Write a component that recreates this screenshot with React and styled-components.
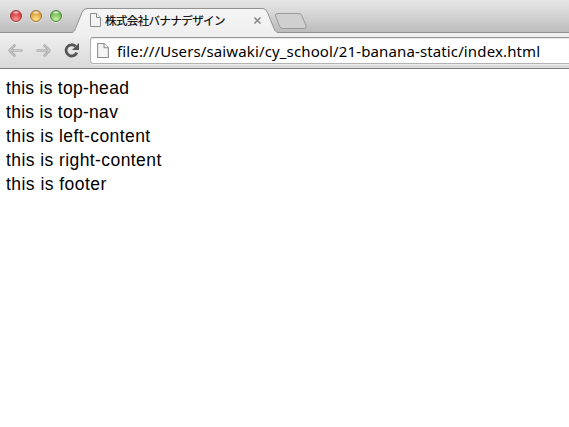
import React from 'react';
import styled, { createGlobalStyle } from 'styled-components';

const GlobalStyle = createGlobalStyle`
  * { box-sizing: border-box; }
  body { margin: 0; background: #fff; color: #000; overflow: hidden; }
`;

const Window = styled.div`
  width: 569px;
  height: 427px;
  overflow: hidden;
  background: #fff;
`;

const TabStrip = styled.header`
  position: relative;
  display: flex;
  height: 33px;
  background: linear-gradient(#e6e6e6, #d5d5d5 45%, #bcbcbc 32px);
  border-bottom: 1px solid #929292;
`;

const WindowControls = styled.div`
  display: flex;
  gap: 8px;
  width: 72px;
  padding: 10px 0 0 10px;
`;

const Light = styled.span`
  width: 12px;
  height: 12px;
  border-radius: 50%;
  border: 1px solid ${({ $edge }) => $edge};
  background:
    radial-gradient(ellipse 4px 2px at 50% 15%, rgba(255, 255, 255, 0.85), transparent),
    radial-gradient(circle at 50% 85%, ${({ $glow }) => $glow}, ${({ $fill }) => $fill} 65%);
  box-shadow: 0 1px 0 rgba(255, 255, 255, 0.5);
`;

const Tab = styled.div`
  position: relative;
  width: 206px;
  height: 33px;
  flex: none;
`;

const TabShape = styled.svg`
  position: absolute;
  left: 0;
  top: 0;
`;

const TabContent = styled.div`
  position: relative;
  display: flex;
  align-items: center;
  height: 33px;
  padding: 7px 16px 0 18px;
`;

const TabTitle = styled.span`
  flex: 1;
  margin-left: 4px;
  font: 400 11.5px/16px "Noto Sans CJK JP", sans-serif;
  letter-spacing: -0.6px;
  -webkit-text-stroke: 0.15px #000;
  white-space: nowrap;
`;

const CloseIcon = styled.svg`
  margin-top: 1px;
`;

const NewTab = styled.svg`
  margin: 12px 0 0 -4px;
  flex: none;
`;

const Toolbar = styled.nav`
  display: flex;
  align-items: flex-start;
  height: 36px;
  padding: 4px 0 0 7px;
  background: linear-gradient(#f0f0f0, #d9d9d9);
  border-bottom: 1px solid #7d7d7d;
`;

const NavIcons = styled.svg`
  flex: none;
  width: 83px;
`;

const AddressBar = styled.div`
  display: flex;
  align-items: center;
  flex: 1;
  height: 27px;
  padding-left: 6px;
  background: #fff;
  border: 1px solid #b2b2b2;
  border-top-color: #989898;
  border-right: 0;
  border-radius: 3px 0 0 3px;
  box-shadow: inset 0 1px 1px #e8e8e8, 0 1px 0 #ededed;
`;

const Address = styled.span`
  margin-left: 8px;
  font: 15px/22px "Noto Sans", sans-serif;
  letter-spacing: 0.13px;
  white-space: nowrap;
`;

const Page = styled.main`
  padding: 7px 6px;
  font: 17.5px/24px "Liberation Sans", sans-serif;
`;

const Line = styled.div`
  white-space: nowrap;
  letter-spacing: ${({ $spacing }) => $spacing};
`;

const DocumentIcon = ({ width = 11, height = 14 }) => (
  <svg width={width} height={height} viewBox="0 0 11 14">
    <path d="M.5.5h6l4 4v9H.5z" fill="#f4f4f4" stroke="#8c8c8c" />
    <path d="M6.5.5v4h4" fill="#fff" stroke="#8c8c8c" />
  </svg>
);

const lines = [
  ['this is top-head', '0.28px'],
  ['this is top-nav', '0.28px'],
  ['this is left-content', '0.42px'],
  ['this is right-content', '0.42px'],
  ['this is footer', '0.46px'],
];

export default function App() {
  return (
    <Window>
      <GlobalStyle />
      <TabStrip>
        <WindowControls>
          <Light $edge="#a03a3c" $fill="#d63c40" $glow="#ff9c98" />
          <Light $edge="#a2743a" $fill="#e0a23c" $glow="#ffe68c" />
          <Light $edge="#53883f" $fill="#72b956" $glow="#c8f6a4" />
        </WindowControls>
        <Tab>
          <TabShape width="206" height="33">
            <defs>
              <linearGradient id="tab" x2="0" y2="1">
                <stop stopColor="#f5f5f5" />
                <stop offset="1" stopColor="#efefef" />
              </linearGradient>
            </defs>
            <path d="M0 33V32.5C2 32 2.5 31 3.5 28.5L10 12.5Q11.5 8.5 15 8.5H191Q194 8.5 195.5 12.5L202 28.5C203 31 204 32 206 32.5V33Z" fill="url(#tab)" />
            <path d="M0 32.5C2 32 2.5 31 3.5 28.5L10 12.5Q11.5 8.5 15 8.5H191Q194 8.5 195.5 12.5L202 28.5C203 31 204 32 206 32.5" fill="none" stroke="#929292" />
          </TabShape>
          <TabContent>
            <DocumentIcon />
            <TabTitle>株式会社バナナデザイン</TabTitle>
            <CloseIcon width="9" height="9">
              <path d="M1.5 1.5l6 6m0-6l-6 6" stroke="#8a8a8a" strokeWidth="1.6" />
            </CloseIcon>
          </TabContent>
        </Tab>
        <NewTab width="34" height="18">
          <path d="M4 1.5H25Q27 1.5 28 4L32 13.5Q33 16.5 30 16.5H9Q6.5 16.5 5.5 14L1.5 4Q.8 1.5 4 1.5Z" fill="#d0d0d0" stroke="#999" />
        </NewTab>
      </TabStrip>
      <Toolbar>
        <NavIcons height="27" viewBox="0 0 83 27">
          <g fill="none" stroke="#adadad" strokeWidth="2.6" strokeLinecap="round" strokeLinejoin="round">
            <path d="M14.5 13.5H2.5m5-5l-5 5 5 5" />
            <path d="M30.5 13.5h12m-5-5l5 5-5 5" />
          </g>
          <g fill="none" stroke="#cbcbcb" strokeLinecap="round" strokeLinejoin="round">
            <path d="M14.5 13.5H2.5m5-5l-5 5 5 5" />
            <path d="M30.5 13.5h12m-5-5l5 5-5 5" />
          </g>
          <path d="M68.5 9.3A5.6 5.6 0 1 0 69.8 15.6" fill="none" stroke="#555" strokeWidth="2.8" />
          <path d="M72 6v7h-7z" fill="#555" />
        </NavIcons>
        <AddressBar>
          <DocumentIcon width={12} height={15} />
          <Address>file:///Users/saiwaki/cy_school/21-banana-static/index.html</Address>
        </AddressBar>
      </Toolbar>
      <Page>
        {lines.map(([text, spacing]) => (
          <Line key={text} $spacing={spacing}>{text}</Line>
        ))}
      </Page>
    </Window>
  );
}
